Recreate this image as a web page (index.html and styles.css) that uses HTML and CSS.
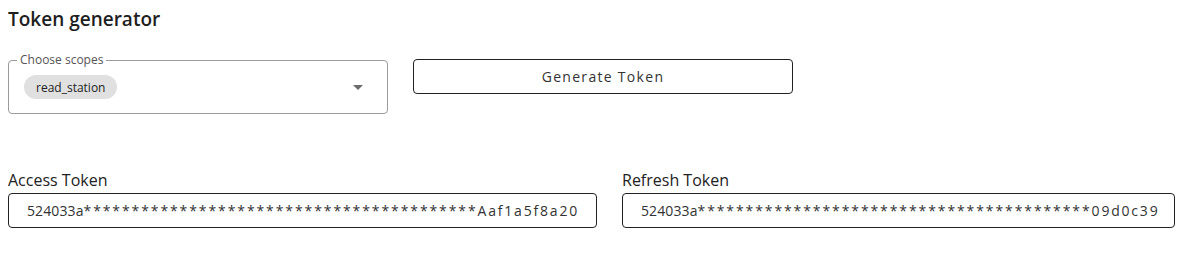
FILE: index.html
```html
<!DOCTYPE html>
<html>
<head>
<meta charset="utf-8">
<link rel="stylesheet" href="styles.css">
</head>
<body>
<h2 class="title">Token generator</h2>
<div class="gen-row">
  <div class="select">
    <span class="select-label">Choose scopes</span>
    <span class="chip">read_station</span>
    <svg class="arrow" width="10" height="5" viewBox="0 0 10 5"><path d="M0 0 L10 0 L5 5 Z" fill="#6b6b6b"/></svg>
  </div>
  <button class="gen-btn">Generate Token</button>
</div>
<div class="tokens">
  <div class="field access">
    <div class="field-label">Access Token</div>
    <div class="field-box"><span class="tk-head">524033a</span><span class="tk-mask">*****************************************</span><span class="tk-tail">Aaf1a5f8a20</span></div>
  </div>
  <div class="field refresh">
    <div class="field-label">Refresh Token</div>
    <div class="field-box"><span class="tk-head">524033a</span><span class="tk-mask">*****************************************</span><span class="tk-tail">09d0c39</span></div>
  </div>
</div>
</body>
</html>
```
FILE: styles.css
```css
* { box-sizing: border-box; }
body {
  margin: 8px;
  font-family: "Open Sans", "Noto Sans", sans-serif;
  color: #222;
  background: #fff;
}
.title {
  margin: 0;
  font-size: 19px;
  font-weight: 600;
  line-height: 22px;
  color: #1e1e1e;
}
.gen-row {
  display: flex;
  align-items: flex-start;
  gap: 25px;
  margin-top: 30px;
}
.select {
  position: relative;
  width: 380px;
  height: 54px;
  border: 1px solid #9a9a9a;
  border-radius: 4px;
  display: flex;
  align-items: center;
  padding: 0 15px;
}
.select-label {
  position: absolute;
  top: -9px;
  left: 8px;
  padding: 0 3px;
  background: #fff;
  font-size: 12px;
  line-height: 15px;
  color: #555;
}
.chip {
  display: inline-flex;
  align-items: center;
  height: 24px;
  padding: 0 12px;
  border-radius: 12px;
  background: #e0e0e0;
  font-size: 12px;
  color: #222;
}
.arrow {
  margin-left: auto;
  margin-right: 9px;
}
.gen-btn {
  margin-top: -1px;
  width: 380px;
  height: 35px;
  border: 1px solid #222;
  border-radius: 4px;
  background: #fff;
  font-family: "Open Sans", "Noto Sans", sans-serif;
  font-size: 14px;
  letter-spacing: 1.3px;
  color: #333;
  cursor: pointer;
}
.tokens {
  display: flex;
  gap: 25px;
  margin-top: 55px;
}
.access { width: 589px; }
.refresh { width: 553px; }
.field-label {
  font-size: 16px;
  line-height: 22px;
  color: #222;
}
.field-box {
  margin-top: 2px;
  height: 35px;
  border: 1px solid #222;
  border-radius: 4px;
  display: flex;
  align-items: center;
  padding: 0 18px;
  font-size: 14px;
  color: #333;
  white-space: nowrap;
  overflow: hidden;
}
.tk-head { letter-spacing: 0.1px; }
.tk-mask { letter-spacing: 1.9px; }
.tk-tail { letter-spacing: 1.8px; }
```
